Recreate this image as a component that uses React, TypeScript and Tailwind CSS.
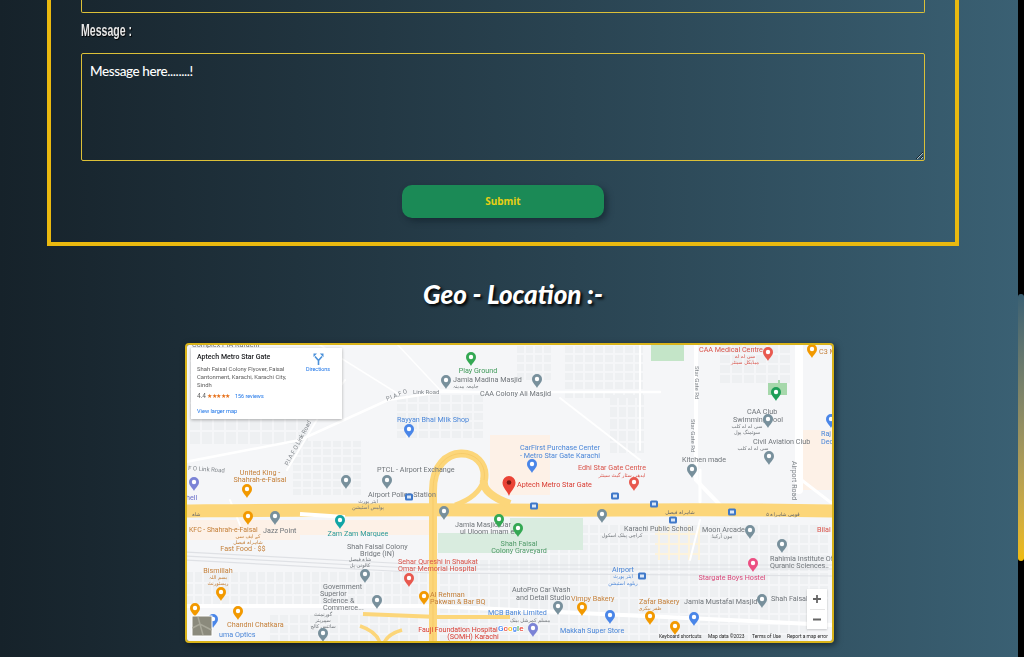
type Label = [number, number, string, string?, ("start" | "middle")?, number?];
type PinDef = [number, number, string];

const GREY = "#70757a";
const ORANGE = "#c5803a";
const RED = "#d9534a";
const BLUE = "#4a86d8";
const URDU = "DejaVu Sans, sans-serif";

const greyLabels: Label[] = [
  [192, 347, "Complex PIA Karachi"],
  [453, 382, "Jamia Madina Masjid"],
  [480, 396, "CAA Colony Ali Masjid"],
  [377, 472, "PTCL - Airport Exchange"],
  [368, 497, "Airport Police Station", "middle"],
  [263, 533, "Jazz Point"],
  [347, 549, "Shah Faisal Colony", "middle"],
  [360, 556, "Bridge (IN)", "middle"],
  [455, 527, "Jamia Masjid Dar", "middle"],
  [460, 534, "ul Uloom Imam e..", "middle"],
  [323, 589, "Government", "middle"],
  [320, 596, "Superior", "middle"],
  [323, 603, "Science &", "middle"],
  [323, 610, "Commerce...", "middle"],
  [747, 414, "CAA Club", "middle"],
  [733, 422, "Swimming Pool", "middle"],
  [753, 444, "Civil Aviation Club", "middle"],
  [682, 462, "Kitchen made", "middle"],
  [624, 531, "Karachi Public School", "middle"],
  [702, 532, "Moon Arcade"],
  [770, 561, "Rahimia Institute Of"],
  [770, 568, "Quranic Sciences.."],
  [512, 592, "AutoPro Car Wash"],
  [516, 600, "and Detail Studio"],
  [684, 604, "Jamia Mustafai Masjid"],
  [771, 601, "Shah Faisal"],
];

const colorLabels: Label[] = [
  [478, 373, "Play Ground", "#3f9a5a", "middle"],
  [433, 422, "Rayyan Bhai Milk Shop", BLUE, "middle"],
  [260, 475, "United King -", ORANGE, "middle"],
  [260, 482, "Shahrah-e-Faisal", ORANGE, "middle"],
  [186, 500, "hell", "#6a6fc9"],
  [560, 450, "CarFirst Purchase Center", BLUE, "middle"],
  [560, 458, "- Metro Star Gate Karachi", BLUE, "middle"],
  [612, 470, "Edhi Star Gate Centre", RED, "middle"],
  [517, 487, "Aptech Metro Star Gate", "#d93a30", "start", 7.2],
  [699, 352, "CAA Medical Centre", RED],
  [819, 354, "C3 M", ORANGE],
  [821, 436, "Raj", BLUE],
  [821, 444, "Dec", BLUE],
  [189, 532, "KFC - Shahrah-e-Faisal", ORANGE, "start", 6.9],
  [243, 551, "Fast Food · $$", ORANGE, "middle"],
  [358, 536, "Zam Zam Marquee", "#2a9a9a", "middle"],
  [519, 546, "Shah Faisal", "#4f9a68", "middle"],
  [519, 553, "Colony Graveyard", "#4f9a68", "middle"],
  [398, 564, "Sehar Qureshi in Shaukat", RED],
  [398, 571, "Omar Memorial Hospital", RED],
  [218, 573, "Bismillah", ORANGE, "middle"],
  [430, 597, "Al Rehman", ORANGE],
  [430, 604, "Pakwan & Bar BQ", ORANGE],
  [227, 627, "Chandni Chatkara", ORANGE],
  [219, 637, "uma Optics", BLUE],
  [458, 632, "Fauji Foundation Hospital", "#d93a30", "middle", 7],
  [473, 639, "(SOMH) Karachi", "#d93a30", "middle"],
  [488, 615, "MCB Bank Limited", BLUE],
  [817, 532, "Bilal", RED],
  [732, 580, "Stargate Boys Hostel", "#d9497a", "middle"],
  [623, 572, "Airport", BLUE, "middle"],
  [571, 601, "Vimpy Bakery", ORANGE],
  [639, 604, "Zafar Bakery", ORANGE],
  [560, 633, "Makkah Super Store", BLUE],
];

const urduLabels: Label[] = [
  [453, 388, "جامعہ مدینہ", GREY],
  [368, 503, "ایئر پورٹ", GREY, "middle"],
  [368, 509, "پولیس اسٹیشن", GREY, "middle"],
  [622, 477, "ایدھی سٹار گیٹ سینٹر", RED, "middle"],
  [745, 358, "سی اے اے", RED, "middle"],
  [745, 364, "میڈیکل سینٹر", RED, "middle"],
  [747, 428, "سی اے اے کلب", GREY, "middle"],
  [747, 434, "سوئمنگ پول", GREY, "middle"],
  [753, 450, "سی اے اے کلب", GREY, "middle"],
  [248, 538, "کے ایف سی", ORANGE, "middle"],
  [248, 544, "شاہراہ فیصل", ORANGE, "middle"],
  [360, 561, "شاہ فیصل", GREY, "middle"],
  [360, 567, "کالونی پل", GREY, "middle"],
  [218, 579, "بسم اللہ", ORANGE, "middle"],
  [218, 585, "ریسٹورنٹ", ORANGE, "middle"],
  [323, 616, "گورنمنٹ", GREY, "middle"],
  [323, 622, "سپیریئر", GREY, "middle"],
  [323, 628, "سائنس کالج", GREY, "middle"],
  [622, 537, "کراچی پبلک اسکول", GREY, "middle"],
  [722, 538, "مون آرکیڈ", GREY, "middle"],
  [623, 578, "ایئر پورٹ", BLUE, "middle"],
  [623, 585, "ریلوے اسٹیشن", BLUE, "middle"],
  [650, 610, "ظفر بیکری", ORANGE, "middle"],
  [530, 622, "مسلم کمرشل بینک", GREY, "middle"],
  [680, 514, "شاہراہ فیصل", "#5f6368", "middle"],
  [783, 516, "قومی شاہراہ ۵", "#5f6368", "middle"],
  [196, 516, "شاہ", "#5f6368", "middle"],
];

const pins: PinDef[] = [
  [471, 358, "#34a853"],
  [446, 381, "#78909c"],
  [537, 380, "#78909c"],
  [409, 430, "#4a86e8"],
  [247, 490, "#f29900"],
  [387, 481, "#78909c"],
  [346, 481, "#78909c"],
  [194, 483, "#7b83d6"],
  [532, 465, "#4a86e8"],
  [634, 483, "#e8594f"],
  [768, 353, "#e8594f"],
  [812, 350, "#f29900"],
  [776, 393, "#1e9e58"],
  [768, 420, "#78909c"],
  [769, 457, "#78909c"],
  [692, 470, "#78909c"],
  [831, 420, "#4a86e8"],
  [248, 517, "#f29900"],
  [275, 517, "#78909c"],
  [340, 521, "#12a5a5"],
  [365, 575, "#78909c"],
  [444, 512, "#78909c"],
  [499, 520, "#34a853"],
  [518, 529, "#34a853"],
  [409, 579, "#e8594f"],
  [221, 593, "#f29900"],
  [323, 634, "#78909c"],
  [377, 601, "#78909c"],
  [424, 597, "#f29900"],
  [195, 609, "#f29900"],
  [238, 612, "#f29900"],
  [213, 620, "#4a86e8"],
  [533, 629, "#7b83d6"],
  [602, 515, "#78909c"],
  [750, 531, "#78909c"],
  [782, 545, "#78909c"],
  [753, 564, "#ec4f82"],
  [558, 607, "#78909c"],
  [582, 608, "#f29900"],
  [650, 617, "#f29900"],
  [675, 627, "#f29900"],
  [610, 616, "#4a86e8"],
  [694, 618, "#4a86e8"],
  [762, 600, "#78909c"],
];

const shields: [number, number][] = [
  [534, 506],
  [654, 504],
  [732, 512],
  [673, 520],
  [615, 496],
  [409, 497],
  [642, 576],
];

// building footprints: x0, y0, x1, y1, cell w, cell h
const blockAreas: number[][] = [
  [517, 346, 553, 376, 9, 9],
  [565, 346, 640, 400, 10, 9],
  [610, 395, 640, 450, 9, 12],
  [293, 441, 363, 495, 10, 8],
  [397, 395, 482, 438, 11, 9],
  [186, 572, 428, 604, 9, 12],
  [440, 560, 830, 600, 10, 13],
  [540, 525, 830, 556, 10, 10],
  [440, 605, 810, 640, 10, 10],
  [720, 345, 790, 378, 12, 10],
  [270, 615, 420, 640, 10, 10],
  [190, 348, 300, 440, 12, 14],
];

function blocks() {
  const out: number[][] = [];
  blockAreas.forEach(([x0, y0, x1, y1, w, h]) => {
    for (let x = x0; x < x1; x += w) {
      for (let y = y0; y < y1; y += h) out.push([x, y, w - 2, h - 2]);
    }
  });
  return out;
}

function Pin({ x, y, color }: { x: number; y: number; color: string }) {
  return (
    <g transform={`translate(${x} ${y})`}>
      <path d="M0 8C-1 5.2-5 3-5 -1a5 5 0 1 1 10 0C5 3 1 5.2 0 8Z" fill={color} />
      <circle cy={-1} r={2.2} fill="#fff" />
    </g>
  );
}

function MapDrawing() {
  return (
    <svg viewBox="187 345 645 296" className="block h-[296px] w-[645px] font-[Roboto,sans-serif] blur-[0.35px]">
      <rect x="185" y="343" width="649" height="300" fill="#f5f6f8" />

      {/* land use */}
      <rect x="651" y="343" width="33" height="18" fill="#c4e5c8" />
      <rect x="768" y="380" width="19" height="15" fill="#a6d8ab" />
      <rect x="490" y="435" width="60" height="60" fill="#fdf1e7" />
      <rect x="300" y="520" width="130" height="15" fill="#fdf1e7" />
      <rect x="190" y="520" width="110" height="20" fill="#fdf1e7" />
      <rect x="800" y="430" width="34" height="60" fill="#fdf1e7" />
      <rect x="655" y="525" width="45" height="35" fill="#fdf3dc" />

      {blocks().map(([x, y, w, h], i) => (
        <rect key={i} x={x} y={y} width={w} height={h} fill="#eef0f2" />
      ))}
      <rect x="438" y="533" width="72" height="20" fill="#d9ecdf" />
      <rect x="510" y="518" width="73" height="32" fill="#d9ecdf" />

      {/* minor roads */}
      <g fill="none" stroke="#fff" strokeLinecap="round">
        <path d="M185 462L300 440 388 400 440 392H660" strokeWidth="2.5" />
        <path d="M287 470L318 418 345 380" strokeWidth="2" />
        <path d="M320 345L400 395" strokeWidth="1.5" />
        <path d="M396 343L440 390 480 392" strokeWidth="1.5" />
        <path d="M560 398L640 460" strokeWidth="2" />
        <path d="M640 343V450" strokeWidth="2" />
        <path d="M696 343V480L720 505" strokeWidth="4" />
        <path d="M799 343V490" strokeWidth="8" />
        <path d="M799 478L834 505" strokeWidth="3" />
        <path d="M185 606H430L834 625" strokeWidth="4" />
        <path d="M230 500L240 525" strokeWidth="2" />
        <path d="M700 470V502" strokeWidth="3" />
        <path d="M700 520L690 560" strokeWidth="2" />
      </g>
      {/* rail lines */}
      <g fill="none" stroke="#dfe1e5" strokeWidth="1.2">
        <path d="M185 552L430 565H834" />
        <path d="M185 556L430 569H834" />
        <path d="M185 560L430 573 834 576" />
      </g>

      {/* highways */}
      <g fill="none" stroke="#fcd67a" strokeLinecap="butt">
        <path d="M185 511C300 510 400 509 500 510S700 508 834 511" strokeWidth="13" />
        <path d="M433 643V490C433 440 490 446 484 480 482 490 494 498 510 504" strokeWidth="8" />
        <path d="M484 480C480 492 470 500 455 505" strokeWidth="5" />
        <path d="M363 614L438 617H510" strokeWidth="4" />
        <path d="M360 626C372 630 378 636 380 643" strokeWidth="3.5" />
        <path d="M402 630C392 633 386 638 384 643" strokeWidth="3.5" />
      </g>
      <path d="M300 514L345 517" fill="none" stroke="#fff" strokeWidth="4" />
      <path d="M433 643V490C433 440 490 446 484 480" fill="none" stroke="#f3c45f" strokeWidth="0.6" />

      {greyLabels.map(([x, y, t, , a], i) => (
        <text key={i} x={x} y={y} fontSize="7.2" fill={GREY} textAnchor={a ?? "start"}>
          {t}
        </text>
      ))}
      {colorLabels.map(([x, y, t, c, a, s], i) => (
        <text key={i} x={x} y={y} fontSize={s ?? 7.2} fill={c} textAnchor={a ?? "start"}>
          {t}
        </text>
      ))}
      <g fontFamily={URDU}>
        {urduLabels.map(([x, y, t, c, a], i) => (
          <text key={i} x={x} y={y} fontSize="5" fill={c} textAnchor={a ?? "start"}>
            {t}
          </text>
        ))}
      </g>

      {/* rotated road names */}
      <g fontSize="6" fill="#80868b">
        <text transform="translate(387 401) rotate(-22)">P.I.A.F O</text>
        <text x="413" y="394">Link Road</text>
        <text transform="translate(288 466) rotate(-62)">P.I.A.F O Link Road</text>
        <text transform="translate(188 470) rotate(4)">F O Link Road</text>
        <text transform="translate(695 366) rotate(90)">Star Gate Rd</text>
        <text transform="translate(691 419) rotate(90)">Star Gate Rd</text>
        <text transform="translate(792 461) rotate(90)" fontSize="7">Airport Road</text>
      </g>

      {pins.map(([x, y, c], i) => (
        <Pin key={i} x={x} y={y} color={c} />
      ))}

      {/* main marker */}
      <path d="M509 496C507.5 491 502.5 488 502.5 482.5a6.5 6.5 0 1 1 13 0C515.5 488 510.5 491 509 496Z" fill="#ea4335" />
      <circle cx="509" cy="482.5" r="2.3" fill="#7a1a12" />

      {shields.map(([x, y], i) => (
        <g key={i}>
          <rect x={x - 4} y={y - 3.5} width="8" height="7" rx="1.5" fill="#3f78c9" />
          <rect x={x - 2} y={y - 1.5} width="4" height="3" fill="#dbe7f7" />
        </g>
      ))}

      {/* Google wordmark */}
      <text x="498" y="631" fontSize="8" fontWeight="500" stroke="#fff" strokeWidth="1.5" paintOrder="stroke">
        <tspan fill="#4285f4">G</tspan>
        <tspan fill="#ea4335">o</tspan>
        <tspan fill="#fbbc05">o</tspan>
        <tspan fill="#4285f4">g</tspan>
        <tspan fill="#34a853">l</tspan>
        <tspan fill="#ea4335">e</tspan>
      </text>

      {/* attribution row */}
      <g fontSize="4.9" fill="#222">
        <text x="659" y="638">Keyboard shortcuts</text>
        <text x="708" y="638">Map data ©2023</text>
        <text x="752" y="638">Terms of Use</text>
        <text x="787" y="638">Report a map error</text>
      </g>

      {/* satellite thumbnail */}
      <rect x="191.5" y="615.5" width="21" height="21" fill="#fff" />
      <rect x="192.5" y="616.5" width="19" height="19" fill="#8b8a7c" />
      <path d="M192.5 628L200 624 211.5 630M198 617L203 635" stroke="#a9a89a" strokeWidth="1.5" fill="none" />
    </svg>
  );
}

function InfoCard() {
  return (
    <div className="absolute left-[4px] top-[3px] flex h-[71px] w-[151px] flex-col bg-white pl-[6px] pt-[3px] font-[Roboto,sans-serif] shadow-[0_1px_3px_rgba(0,0,0,0.3)] blur-[0.2px]">
      <div className="flex">
        <div className="w-[97px]">
          <p className="text-[7px] font-medium leading-[12px] text-[#202124]">Aptech Metro Star Gate</p>
          <p className="mt-[2px] text-[5.9px] leading-[8px] text-[#5b5b5b]">
            Shah Faisal Colony Flyover, Faisal Cantonment, Karachi, Karachi City, Sindh
          </p>
        </div>
        <div className="ml-[9px] flex w-[30px] flex-col items-center pt-[2px]">
          <svg width="11" height="12" viewBox="0 0 11 12">
            <path d="M5.5 12V7.5L2 3.5M5.5 7.5L9 3.5" fill="none" stroke="#4a90d9" strokeWidth="1.6" />
            <path d="M0.5 0.5H4L0.5 4ZM6.8 0.5H10.5V4.2Z" fill="#4a90d9" />
          </svg>
          <span className="mt-[1px] text-[5.4px] leading-[7px] text-[#1a73e8]">Directions</span>
        </div>
      </div>
      <div className="mt-[3px] flex items-center text-[6.5px] leading-[9px]">
        <span className="text-[#5b5b5b]">4.4</span>
        <span className="ml-[1px] text-[6.2px] tracking-[-0.4px] text-[#e7711b]">★★★★★</span>
        <span className="ml-[5px] text-[5.4px] text-[#1a73e8]">156 reviews</span>
      </div>
      <span className="mt-[6px] text-[5.6px] leading-[8px] text-[#1a73e8]">View larger map</span>
    </div>
  );
}

function ZoomControl() {
  return (
    <div className="absolute left-[620px] top-[244px] flex h-[40px] w-[20px] flex-col items-center bg-white text-[#666] shadow-[0_1px_2px_rgba(0,0,0,0.2)]">
      <svg width="20" height="20" viewBox="0 0 20 20">
        <path d="M6 10h8M10 6v8" stroke="currentColor" strokeWidth="1.8" />
      </svg>
      <div className="h-px w-[15px] bg-[#e6e6e6]" />
      <svg width="20" height="19" viewBox="0 0 20 19">
        <path d="M6 9.5h8" stroke="currentColor" strokeWidth="1.8" />
      </svg>
    </div>
  );
}

export default function App() {
  return (
    <div className="flex h-[657px] w-full overflow-hidden bg-black">
      <main className="h-full w-[1018px] bg-gradient-to-r from-[#16222a] to-[#3a6073]">
        <section className="ml-[47px] w-[912px] border-x-4 border-b-4 border-[#eab90f] px-[30px] pb-[24px]">
          <div className="h-[13px] rounded-b-[2px] border-x border-b border-[#dcc038]" />
          <label className="mt-[8px] block h-[32px] origin-left scale-x-[0.66] font-['Liberation_Sans',sans-serif] text-[16px] leading-[20px] font-bold text-[#e8e8e8] [text-shadow:1px_1px_1px_#000]">
            Message :
          </label>
          <textarea
            placeholder="Message here........!"
            className="block h-[108px] w-full rounded-[2px] border border-[#dcc038] bg-transparent px-[8px] py-[8px] font-['Lato',sans-serif] text-[13.5px] leading-[18px] font-medium tracking-[-0.4px] text-white placeholder:text-white"
          />
          <div className="mt-[24px] flex justify-center">
            <button className="h-[33px] w-[202px] rounded-[10px] bg-[#1b8a56] font-['Noto_Sans',sans-serif] text-[10px] font-bold text-[#e6cf14] shadow-[3px_3px_6px_rgba(15,30,40,0.6)]">
              Submit
            </button>
          </div>
        </section>

        <h2 className="mt-[28px] h-[69px] pl-[8px] text-center font-['Lato',sans-serif] text-[26px] leading-[40px] font-black text-white italic [text-shadow:2px_2px_3px_#000]">
          Geo - Location :-
        </h2>

        <div className="relative ml-[185px] h-[300px] w-[649px] overflow-hidden rounded-[4px] border-2 border-[#d9b31a] shadow-[2px_2px_6px_rgba(0,0,0,0.5)]">
          <MapDrawing />
          <InfoCard />
          <ZoomControl />
        </div>
      </main>
      <aside className="h-full w-[6px] bg-black pt-[294px]">
        <div className="h-[267px] w-full rounded-full bg-gradient-to-b from-[#3a6073] to-[#f0bc08]" />
      </aside>
    </div>
  );
}
